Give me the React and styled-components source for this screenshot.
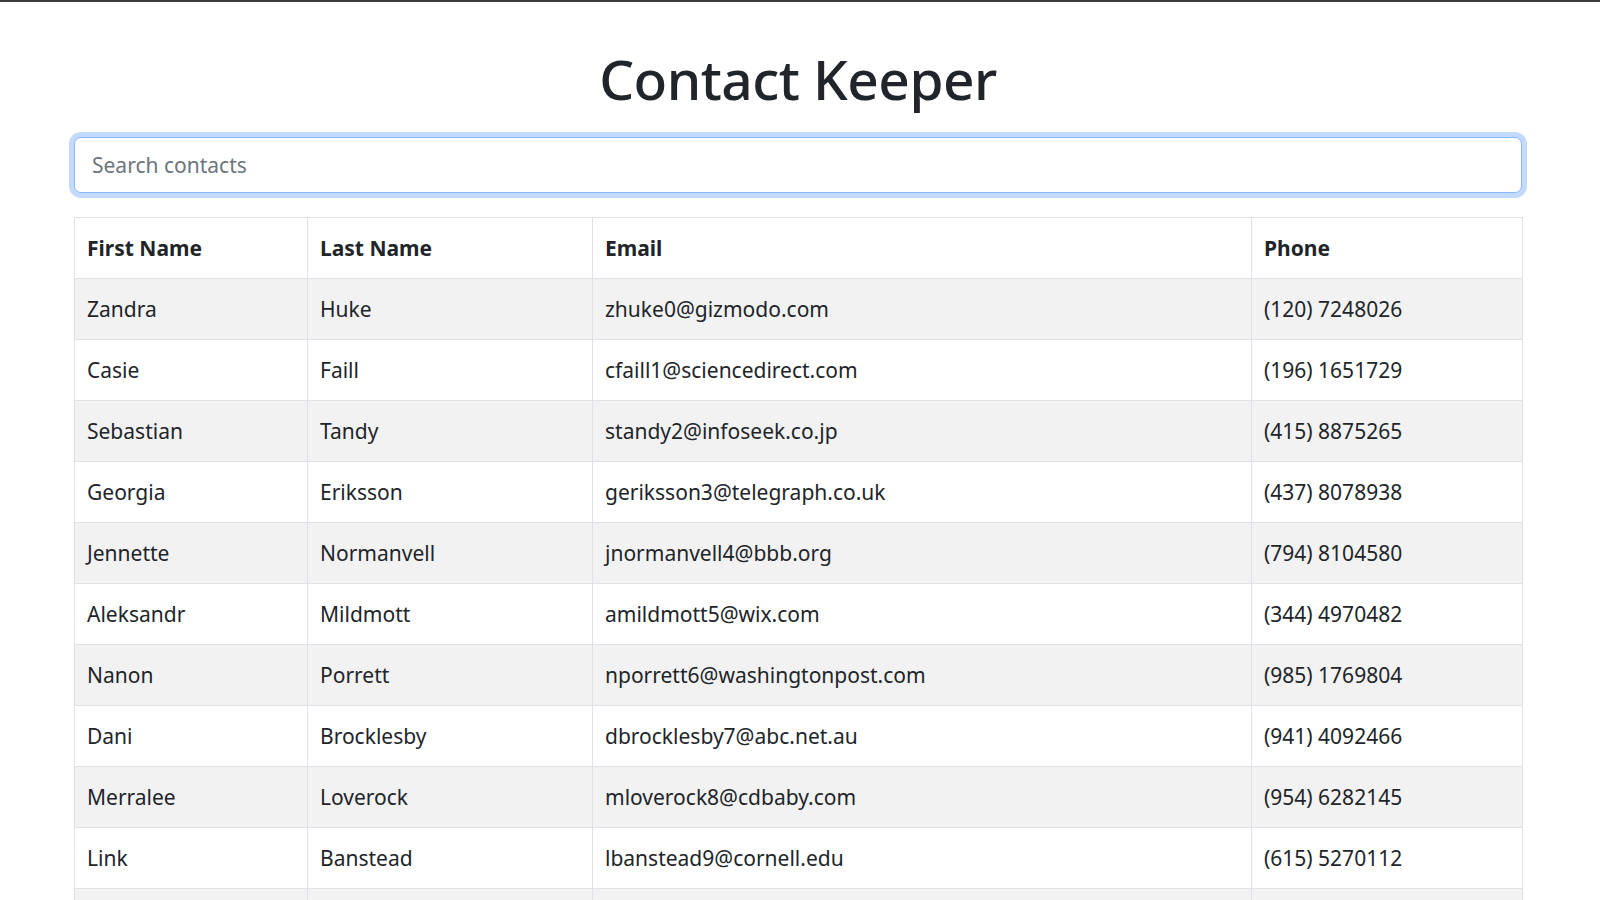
import React, { useState } from 'react';
import styled, { createGlobalStyle } from 'styled-components';

const CONTACTS = [
  { first: 'Zandra', last: 'Huke', email: 'zhuke0@gizmodo.com', phone: '(120) 7248026' },
  { first: 'Casie', last: 'Faill', email: 'cfaill1@sciencedirect.com', phone: '(196) 1651729' },
  { first: 'Sebastian', last: 'Tandy', email: 'standy2@infoseek.co.jp', phone: '(415) 8875265' },
  { first: 'Georgia', last: 'Eriksson', email: 'geriksson3@telegraph.co.uk', phone: '(437) 8078938' },
  { first: 'Jennette', last: 'Normanvell', email: 'jnormanvell4@bbb.org', phone: '(794) 8104580' },
  { first: 'Aleksandr', last: 'Mildmott', email: 'amildmott5@wix.com', phone: '(344) 4970482' },
  { first: 'Nanon', last: 'Porrett', email: 'nporrett6@washingtonpost.com', phone: '(985) 1769804' },
  { first: 'Dani', last: 'Brocklesby', email: 'dbrocklesby7@abc.net.au', phone: '(941) 4092466' },
  { first: 'Merralee', last: 'Loverock', email: 'mloverock8@cdbaby.com', phone: '(954) 6282145' },
  { first: 'Link', last: 'Banstead', email: 'lbanstead9@cornell.edu', phone: '(615) 5270112' },
  { first: 'Ardelis', last: 'Gorry', email: 'agorrya@ning.com', phone: '(512) 3390871' },
];

const GlobalStyle = createGlobalStyle`
  html, body {
    margin: 0;
    overflow: hidden;
    background: #fff;
  }
  body {
    font-family: "Noto Sans", "Open Sans", "Liberation Sans", sans-serif;
    color: #212529;
    border-top: 2px solid #3b3b3b;
  }
  * {
    box-sizing: border-box;
  }
`;

const Page = styled.div`
  width: 1448px;
  margin-left: 74px;
  padding-top: 47px;
`;

const Title = styled.h1`
  margin: 0 0 28px;
  text-align: center;
  font-size: 55px;
  font-weight: 500;
  line-height: 60px;
  letter-spacing: -0.5px;
`;

const SearchInput = styled.input`
  display: block;
  width: 100%;
  height: 56px;
  margin-bottom: 24px;
  padding: 0 17px;
  font-family: inherit;
  font-size: 21px;
  color: #495057;
  border: 1px solid #86b7fe;
  border-radius: 7px;
  outline: none;
  box-shadow: 0 0 0 5px #c3dafe;

  &::placeholder {
    color: #6c757d;
  }
`;

const Table = styled.table`
  width: 100%;
  border-collapse: collapse;
  font-size: 21px;
  line-height: 30px;
  table-layout: fixed;
`;

const HeadCell = styled.th`
  width: ${(p) => p.$w};
  padding: 15px 12px;
  text-align: left;
  font-weight: 700;
  border: 1px solid #dee2e6;
`;

const Row = styled.tr`
  background: ${(p) => (p.$striped ? '#f2f2f2' : '#fff')};
`;

const Cell = styled.td`
  padding: 15px 12px;
  border: 1px solid #dee2e6;
  white-space: nowrap;
`;

const App = () => {
  const [term, setTerm] = useState('');

  return (
    <>
      <GlobalStyle />
      <Page>
        <Title>Contact Keeper</Title>
        <SearchInput
          placeholder="Search contacts"
          value={term}
          onChange={(e) => setTerm(e.target.value)}
        />
        <Table>
          <thead>
            <tr>
              <HeadCell $w="233px">First Name</HeadCell>
              <HeadCell $w="285px">Last Name</HeadCell>
              <HeadCell $w="659px">Email</HeadCell>
              <HeadCell $w="271px">Phone</HeadCell>
            </tr>
          </thead>
          <tbody>
            {CONTACTS.map((c, i) => (
              <Row key={c.email} $striped={i % 2 === 0}>
                <Cell>{c.first}</Cell>
                <Cell>{c.last}</Cell>
                <Cell>{c.email}</Cell>
                <Cell>{c.phone}</Cell>
              </Row>
            ))}
          </tbody>
        </Table>
      </Page>
    </>
  );
};

export default App;
